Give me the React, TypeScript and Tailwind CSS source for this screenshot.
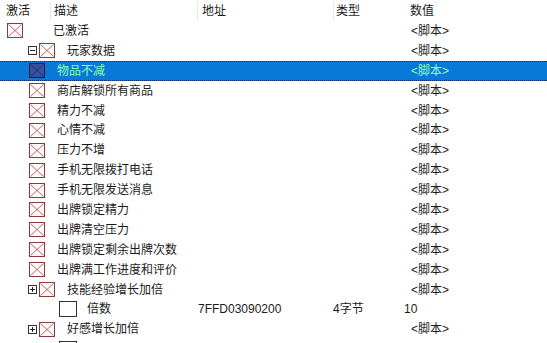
type Row = {
  pl: string;
  exp?: "minus" | "plus";
  box: "x" | "empty";
  textMl: string;
  label: string;
  addr?: string;
  type?: string;
  value: string;
  selected?: boolean;
};

const rows: Row[] = [
  { pl: "pl-[7px]", box: "x", textMl: "ml-[30px]", label: "已激活", value: "<脚本>" },
  { pl: "pl-[28px]", exp: "minus", box: "x", textMl: "ml-[12px]", label: "玩家数据", value: "<脚本>" },
  { pl: "pl-[29px]", box: "x", textMl: "ml-[12px]", label: "物品不减", value: "<脚本>", selected: true },
  { pl: "pl-[29px]", box: "x", textMl: "ml-[12px]", label: "商店解锁所有商品", value: "<脚本>" },
  { pl: "pl-[29px]", box: "x", textMl: "ml-[12px]", label: "精力不减", value: "<脚本>" },
  { pl: "pl-[29px]", box: "x", textMl: "ml-[12px]", label: "心情不减", value: "<脚本>" },
  { pl: "pl-[29px]", box: "x", textMl: "ml-[12px]", label: "压力不增", value: "<脚本>" },
  { pl: "pl-[29px]", box: "x", textMl: "ml-[12px]", label: "手机无限拨打电话", value: "<脚本>" },
  { pl: "pl-[29px]", box: "x", textMl: "ml-[12px]", label: "手机无限发送消息", value: "<脚本>" },
  { pl: "pl-[29px]", box: "x", textMl: "ml-[12px]", label: "出牌锁定精力", value: "<脚本>" },
  { pl: "pl-[29px]", box: "x", textMl: "ml-[12px]", label: "出牌清空压力", value: "<脚本>" },
  { pl: "pl-[29px]", box: "x", textMl: "ml-[12px]", label: "出牌锁定剩余出牌次数", value: "<脚本>" },
  { pl: "pl-[29px]", box: "x", textMl: "ml-[12px]", label: "出牌满工作进度和评价", value: "<脚本>" },
  { pl: "pl-[28px]", exp: "plus", box: "x", textMl: "ml-[12px]", label: "技能经验增长加倍", value: "<脚本>" },
  { pl: "pl-[59px]", box: "empty", textMl: "ml-[10px]", label: "倍数", addr: "7FFD03090200", type: "4字节", value: "10" },
  { pl: "pl-[28px]", exp: "plus", box: "x", textMl: "ml-[12px]", label: "好感增长加倍", value: "<脚本>" },
  { pl: "pl-[59px]", box: "empty", textMl: "ml-[10px]", label: "", value: "" },
];

function XBox({ selected }: { selected?: boolean }) {
  return (
    <svg width="16" height="15" viewBox="0 0 16 15" className="shrink-0">
      <rect
        x="0.5"
        y="0.5"
        width="15"
        height="14"
        fill={selected ? "#34509f" : "#ffffff"}
        stroke={selected ? "#2a1838" : "#8a3a3a"}
      />
      <path
        d="M1.5 1.5 L14.5 13.5 M14.5 1.5 L1.5 13.5"
        stroke={selected ? "#27306e" : "#d65c5c"}
        strokeWidth="1"
      />
    </svg>
  );
}

function EmptyBox() {
  return <div className="h-[16px] w-[18px] shrink-0 border border-[#333] bg-white" />;
}

function Expander({ kind }: { kind: "minus" | "plus" }) {
  return (
    <svg width="9" height="9" viewBox="0 0 9 9" className="mr-[2px] shrink-0">
      <rect x="0.5" y="0.5" width="8" height="8" fill="#fff" stroke="#333" />
      <path d="M2 4.5 H7" stroke="#222" />
      {kind === "plus" && <path d="M4.5 2 V7" stroke="#222" />}
    </svg>
  );
}

export default function App() {
  const font = { fontFamily: '"Liberation Sans", "Noto Sans CJK SC", sans-serif' };
  return (
    <div className="h-[343px] w-[547px] overflow-hidden bg-white text-[12px] text-[#1b1b1b]" style={font}>
      <div className="flex h-[21px] items-center">
        <div className="w-[50px] pl-[6px]">激活</div>
        <div className="h-[18px] w-px bg-[#e8e8e8]" />
        <div className="w-[146px] pl-[3px]">描述</div>
        <div className="h-[18px] w-px bg-[#e8e8e8]" />
        <div className="w-[135px] pl-[4px]">地址</div>
        <div className="h-[18px] w-px bg-[#e8e8e8]" />
        <div className="w-[75px] pl-[2px]">类型</div>
        <div className="flex-1 pl-[1px]">数值</div>
      </div>
      {rows.map((r, i) => (
        <div
          key={i}
          className={
            r.selected
              ? "flex h-[19.9px] items-center border-y border-dotted border-[#10204a] bg-[#0a78d6] text-[#8dffb0]"
              : "flex h-[19.9px] items-center"
          }
        >
          <div className={`flex w-[197px] items-center ${r.pl}`}>
            {r.exp && <Expander kind={r.exp} />}
            {r.box === "x" ? <XBox selected={r.selected} /> : <EmptyBox />}
            {r.label && <span className={r.textMl}>{r.label}</span>}
          </div>
          <div className="w-[136px] pl-[1px]">{r.addr}</div>
          <div className="w-[71px]">{r.type}</div>
          <div className={r.value === "10" ? "flex-1" : "flex-1 pl-[7px]"}>{r.value}</div>
        </div>
      ))}
    </div>
  );
}
